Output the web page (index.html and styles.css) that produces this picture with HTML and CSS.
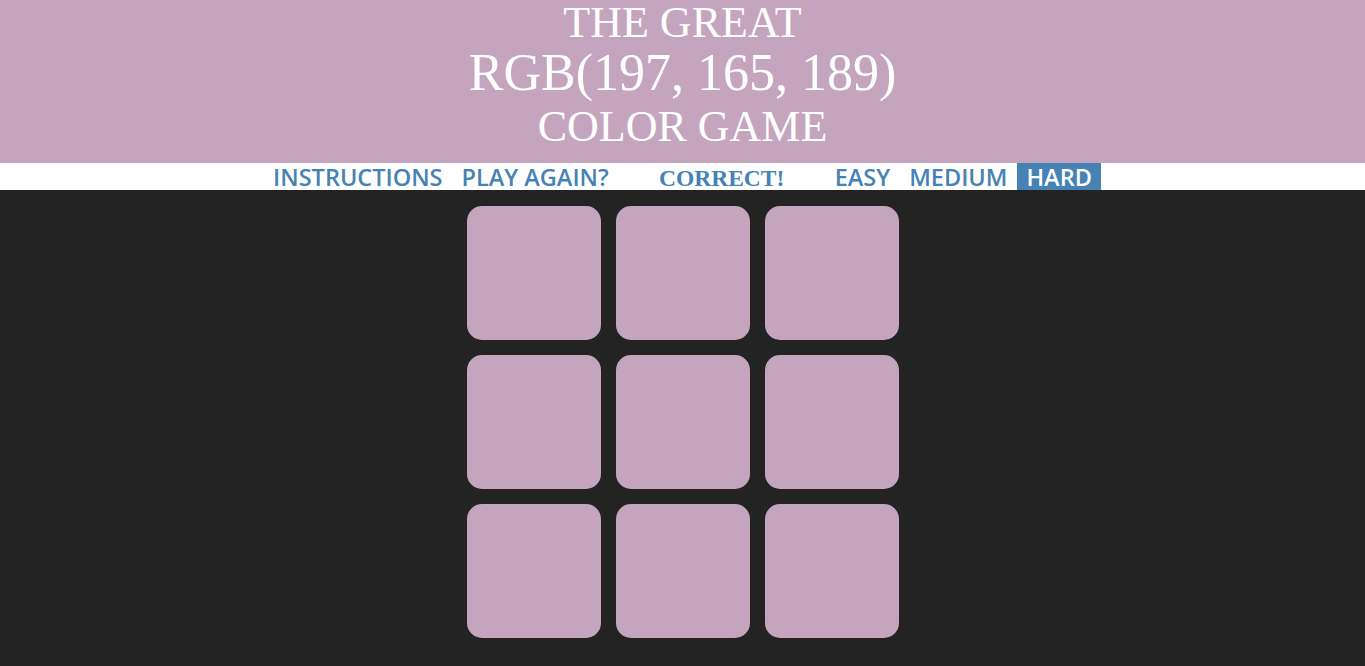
FILE: index.html
```html
<!DOCTYPE html>
<html>
<head>
<meta charset="utf-8">
<link rel="stylesheet" href="styles.css">
</head>
<body>
<header class="banner">
  <h1 class="title">
    <span class="title-line first">THE GREAT</span>
    <span class="title-rgb">RGB(197, 165, 189)</span>
    <span class="title-line last">COLOR GAME</span>
  </h1>
</header>
<nav class="stripe">
  <button class="nav-btn">INSTRUCTIONS</button>
  <button class="nav-btn">PLAY AGAIN?</button>
  <span class="message">CORRECT!</span>
  <button class="nav-btn">EASY</button>
  <button class="nav-btn">MEDIUM</button>
  <button class="nav-btn selected">HARD</button>
</nav>
<main class="board">
  <div class="square"></div>
  <div class="square"></div>
  <div class="square"></div>
  <div class="square"></div>
  <div class="square"></div>
  <div class="square"></div>
  <div class="square"></div>
  <div class="square"></div>
  <div class="square"></div>
</main>
</body>
</html>
```
FILE: styles.css
```css
html, body {
  margin: 0;
  padding: 0;
}
body {
  background: #232323;
  font-family: "Liberation Serif", "Times New Roman", serif;
}
.banner {
  background: rgb(197, 165, 189);
  height: 163px;
  text-align: center;
  color: #fff;
}
.title {
  margin: 0;
  font-weight: normal;
  display: flex;
  flex-direction: column;
  align-items: center;
}
.title-line {
  font-size: 44px;
}
.title-line.first {
  line-height: 46px;
}
.title-line.last {
  line-height: 54px;
}
.title-rgb {
  font-size: 52px;
  line-height: 54px;
}
.stripe {
  background: #fff;
  height: 27px;
  display: flex;
  justify-content: center;
  align-items: stretch;
}
.nav-btn {
  border: none;
  background: none;
  color: steelblue;
  font-family: "Open Sans", sans-serif;
  font-weight: 600;
  font-size: 23.5px;
  line-height: 25px;
  padding: 2px 9.5px 0;
  margin: 0;
  text-transform: uppercase;
  cursor: pointer;
}
.nav-btn.selected {
  background: steelblue;
  color: #fff;
}
.message {
  display: inline-block;
  width: 207px;
  text-align: center;
  color: steelblue;
  font-family: "Liberation Serif", serif;
  font-weight: bold;
  font-size: 23.5px;
  line-height: 30px;
}
.board {
  display: grid;
  grid-template-columns: repeat(3, 134px);
  grid-auto-rows: 134px;
  gap: 15px;
  justify-content: center;
  padding-top: 16px;
}
.square {
  background: rgb(197, 165, 189);
  border-radius: 15px;
}
```
